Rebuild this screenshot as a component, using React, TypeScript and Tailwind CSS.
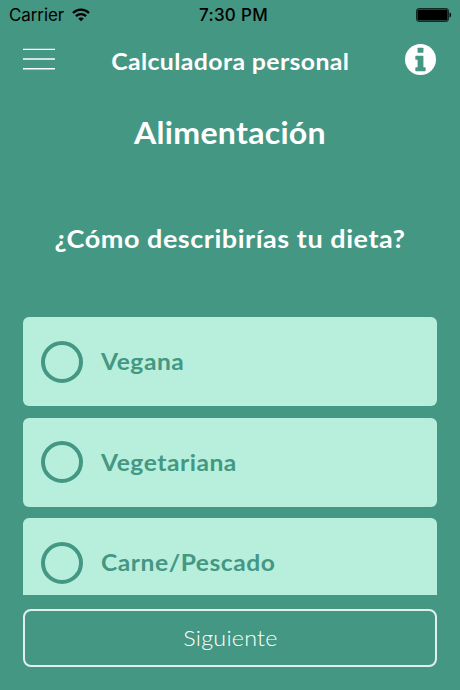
interface DietOptionProps {
  label: string
}

const options: DietOptionProps[] = [{ label: "Vegana" }, { label: "Vegetariana" }, { label: "Carne/Pescado" }]

const StatusBar = () => (
  <div className="grid h-[30px] shrink-0 grid-cols-3 items-center pr-2 pl-[9px] font-['Inter',sans-serif] text-[17px] leading-[30px] text-black">
    <div className="flex items-center gap-2">
      <span className="tracking-[-0.1px]">Carrier</span>
      <svg width="18" height="14" viewBox="0 0 18 14" fill="none" stroke="black" strokeWidth="2.3">
        <path d="M1 5C5.500.6 12.500.6 17 5" />
        <path d="M3.9 8.2c2.9-2.8 7.3-2.8 10.2 0" />
        <path d="M9 13.3 6.2 10.6c1.6-1.5 4-1.5 5.6 0Z" fill="black" stroke="none" />
      </svg>
    </div>
    <span className="pl-[6px] text-center font-medium tracking-[0.3px] whitespace-nowrap">7:30 PM</span>
    <svg className="justify-self-end" width="36" height="14" viewBox="0 0 36 14">
      <rect x="0.6" y="0.6" width="31.8" height="12.8" rx="2" fill="none" stroke="black" strokeWidth="0.8" />
      <rect x="1.4" y="1.4" width="30.2" height="11.2" rx="1" fill="black" />
      <path d="M33.5 4.5c2.2.5 2.2 4.500 0 5Z" fill="black" />
    </svg>
  </div>
)

const MenuIcon = () => (
  <svg width="32" height="22" viewBox="0 0 32 22" stroke="white" strokeWidth="1.4">
    <path d="M0 1.4h32M0 11h32M0 20.700h32" />
  </svg>
)

const InfoIcon = () => (
  <svg width="31" height="31" viewBox="0 0 1536 1536">
    <circle cx="768" cy="768" r="768" fill="white" />
    <g fill="#449783">
      <rect x="624" y="180" width="288" height="256" rx="32" />
      <path d="M544 576h336q32 0 32 32v544h80q32 0 32 32v128q0 32-32 32H544q-32 0-32-32v-128q0-32 32-32h80V784h-80q-32 0-32-32V608q0-32 32-32Z" />
    </g>
  </svg>
)

const Header = () => (
  <header className="flex h-[60px] shrink-0 items-center justify-between pr-6 pl-[23px] text-white">
    <button aria-label="Menú" className="mb-[2px]">
      <MenuIcon />
    </button>
    <h1 className="scale-x-[1.08] pt-0.5 text-[23px] leading-8 font-bold tracking-[0.35px] whitespace-nowrap">
      Calculadora personal
    </h1>
    <button aria-label="Información" className="mb-px">
      <InfoIcon />
    </button>
  </header>
)

const DietOption = ({ label }: DietOptionProps) => (
  <button className="flex h-[89px] w-full shrink-0 items-center gap-[18px] rounded-md bg-[#b7efdc] pl-[18px] text-[#449783]">
    <span className="size-[42px] rounded-full border-4 border-[#449783]" />
    <span className="origin-left scale-x-[1.07] pb-px text-[23px] leading-8 font-bold tracking-[0.5px]">{label}</span>
  </button>
)

export default function App() {
  return (
    <div className="flex h-[690px] w-[460px] flex-col overflow-hidden bg-[#449783] font-['Lato',sans-serif]">
      <StatusBar />
      <Header />
      <main className="flex min-h-0 flex-1 flex-col px-[23px]">
        <h2 className="mt-[22px] scale-x-[1.07] text-center text-[30px] leading-10 font-bold tracking-[0.25px] text-white">
          Alimentación
        </h2>
        <p className="mt-[66px] scale-x-[1.08] text-center text-[25px] leading-10 font-bold tracking-[0.5px] whitespace-nowrap text-white">
          ¿Cómo describirías tu dieta?
        </p>
        <div className="mt-[59px] flex h-[278px] shrink-0 flex-col gap-[11.5px] overflow-hidden">
          {options.map((option) => (
            <DietOption key={option.label} {...option} />
          ))}
        </div>
        <button className="mt-[14px] h-[58px] shrink-0 rounded-lg border-2 border-white/85 pb-0.5 text-[22px] font-light text-white">
          <span className="inline-block scale-x-[1.06] tracking-[0.2px]">Siguiente</span>
        </button>
      </main>
    </div>
  )
}
